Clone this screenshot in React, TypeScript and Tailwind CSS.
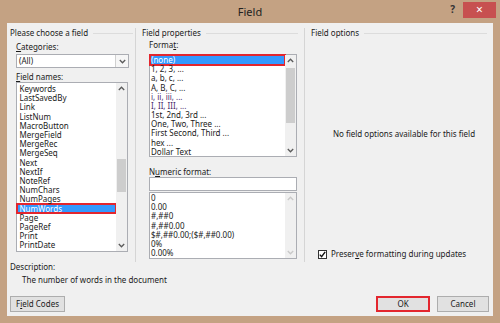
import type { ReactNode } from 'react'

const fieldNames = [
  'Keywords',
  'LastSavedBy',
  'Link',
  'ListNum',
  'MacroButton',
  'MergeField',
  'MergeRec',
  'MergeSeq',
  'Next',
  'NextIf',
  'NoteRef',
  'NumChars',
  'NumPages',
  'NumWords',
  'Page',
  'PageRef',
  'Print',
  'PrintDate',
]

const formats = [
  '(none)',
  '1, 2, 3, ...',
  'a, b, c, ...',
  'A, B, C, ...',
  'i, ii, iii, ...',
  'I, II, III, ...',
  '1st, 2nd, 3rd ...',
  'One, Two, Three ...',
  'First Second, Third ...',
  'hex ...',
  'Dollar Text',
]

const numeric = ['0', '0.00', '#,##0', '#,##0.00', '$#,##0.00;($#,##0.00)', '0%', '0.00%']

function Chevron({ up, faded }: { up?: boolean; faded?: boolean }) {
  return (
    <svg width="7" height="5" viewBox="0 0 7 5" className="block">
      <polyline
        points={up ? '0.8,4 3.5,1.2 6.2,4' : '0.8,1 3.5,3.8 6.2,1'}
        fill="none"
        stroke={faded ? '#c8c8c8' : '#5a5a5a'}
        strokeWidth="1.3"
      />
    </svg>
  )
}

function Scrollbar({ thumbTop, thumbHeight, faded }: { thumbTop?: number; thumbHeight?: number; faded?: boolean }) {
  return (
    <div className="flex w-[11px] shrink-0 flex-col bg-[#f0f0f0]">
      <div className="flex h-[11px] items-center justify-center">
        <Chevron up faded={faded} />
      </div>
      <div className="flex-1">
        {thumbHeight ? (
          <div className="mx-auto w-[9px] bg-[#cdcdcd]" style={{ marginTop: thumbTop, height: thumbHeight }} />
        ) : null}
      </div>
      <div className="flex h-[11px] items-center justify-center">
        <Chevron faded={faded} />
      </div>
    </div>
  )
}

function Item({ text, selected, className = '' }: { text: string; selected?: boolean; className?: string }) {
  return (
    <div
      className={`flex h-[9.2px] items-center whitespace-nowrap leading-none ${
        selected ? 'bg-[#3399ff] text-white shadow-[0_0_0_1px_#e3262e,inset_0_0_0_1px_#e3262e]' : ''
      } ${className}`}
    >
      {text}
    </div>
  )
}

function GroupTitle({ children }: { children: ReactNode }) {
  return (
    <div className="flex h-[10px] items-center gap-[5px]">
      <span className="whitespace-nowrap leading-none">{children}</span>
      <div className="h-px flex-1 bg-[#dcdcdc]" />
    </div>
  )
}

function Button({ children, primary, className = '' }: { children: ReactNode; primary?: boolean; className?: string }) {
  return (
    <button
      type="button"
      className={`flex h-[16px] items-center justify-center bg-[#e1e1e1] leading-none ${
        primary ? 'border-2 border-[#e3262e]' : 'border border-[#adadad]'
      } ${className}`}
    >
      {children}
    </button>
  )
}

export default function App() {
  return (
    <div className="flex h-[323px] w-[500px] flex-col bg-[#c4a283] font-['Noto_Sans',sans-serif] text-[8px] text-[#1a1a1a]">
      <div className="grid h-[23px] shrink-0 grid-cols-[1fr_auto_1fr]">
        <div />
        <div className="pt-[5px] text-[11px] leading-[14px] text-[#222]">Field</div>
        <div className="flex items-start justify-end">
          <span className="mr-[8px] mt-[4px] text-[10px] font-bold leading-none text-[#333]">?</span>
          <div className="mr-[4px] mt-[2px] flex h-[16px] w-[33px] items-center justify-center bg-[#c75050] text-[12px] leading-none text-white">
            ×
          </div>
        </div>
      </div>

      <div className="mx-[7px] mb-[7px] flex flex-1 flex-col bg-[#f0f0f0]">
        <div className="mt-[5px] flex h-[234px]">
          {/* left */}
          <div className="w-[129px] shrink-0 border-r border-[#d5d5d5] pl-[3px] pr-[2px]">
            <GroupTitle>Please choose a field</GroupTitle>
            <div className="pl-[6px]">
              <div className="mt-[4px] h-[10px] leading-[10px]">
                <span className="underline">C</span>ategories:
              </div>
              <div className="mt-[2px] flex h-[14px] w-[113px] border border-[#abadb3] bg-white">
                <div className="flex flex-1 items-center pl-[2px] leading-none">(All)</div>
                <div className="flex w-[13px] items-center justify-center border-l border-[#d0d0d0] bg-[#f6f6f6]">
                  <Chevron />
                </div>
              </div>
              <div className="mt-[4px] h-[10px] leading-[10px]">
                <span className="underline">F</span>ield names:
              </div>
              <div className="flex h-[170px] w-[112px] border border-[#abadb3] bg-white">
                <div className="flex-1 pt-[1.5px]">
                  {fieldNames.map((n) => (
                    <Item key={n} text={n} selected={n === 'NumWords'} className="pl-[2.5px]" />
                  ))}
                </div>
                <Scrollbar thumbTop={65} thumbHeight={33} />
              </div>
            </div>
          </div>

          {/* middle */}
          <div className="w-[169px] shrink-0 border-r border-[#d5d5d5] pl-[6px] pr-[6px]">
            <GroupTitle>Field properties</GroupTitle>
            <div className="pl-[7px]">
              <div className="mt-[2px] h-[10px] leading-[10px]">
                Forma<span className="underline">t</span>:
              </div>
              <div className="mt-[4px] flex h-[103px] w-[148px] border border-[#abadb3] bg-white">
                <div className="flex-1 pt-[0.4px]">
                  {formats.map((f, i) => (
                    <Item
                      key={f}
                      text={f}
                      selected={i === 0}
                      className={`pl-[1px] ${i === 4 || i === 5 ? 'text-[#4b2a6b]' : ''}`}
                    />
                  ))}
                </div>
                <Scrollbar thumbTop={2} thumbHeight={55} />
              </div>
              <div className="mt-[10px] h-[10px] leading-[10px]">
                N<span className="underline">u</span>meric format:
              </div>
              <div className="h-[14px] w-[148px] border border-[#abadb3] bg-white" />
              <div className="mt-[1px] flex h-[67px] w-[148px] border border-[#abadb3] bg-white">
                <div className="flex-1 pt-[0.4px]">
                  {numeric.map((n) => (
                    <Item key={n} text={n} className="pl-[1px]" />
                  ))}
                </div>
                <Scrollbar faded />
              </div>
            </div>
          </div>

          {/* right */}
          <div className="flex-1 pl-[6px] pr-[6px]">
            <GroupTitle>Field options</GroupTitle>
            <div className="mt-[91px] h-[10px] pl-[10px] text-center leading-[10px]">
              No field options available for this field
            </div>
            <div className="mt-[110px] flex h-[10px] items-center gap-[4px] pl-[7px]">
              <div className="flex h-[9px] w-[9px] items-center justify-center border border-[#333] bg-white">
                <svg width="7" height="7" viewBox="0 0 7 7">
                  <polyline points="0.8,3.6 2.6,5.6 6.2,0.8" fill="none" stroke="#111" strokeWidth="1.4" />
                </svg>
              </div>
              <span className="leading-none">
                Preser<span className="underline">v</span>e formatting during updates
              </span>
            </div>
          </div>
        </div>

        <div className="h-[10px] pl-[3px] leading-[10px]">Description:</div>
        <div className="mt-[3px] h-[10px] pl-[15px] leading-[10px]">The number of words in the document</div>

        <div className="mt-[11px] flex pr-[4px] pl-[3px]">
          <Button className="w-[55px]">
            F<span className="underline">i</span>eld Codes
          </Button>
          <div className="flex-1" />
          <Button primary className="w-[54px]">
            OK
          </Button>
          <Button className="ml-[7px] w-[52px]">Cancel</Button>
        </div>
      </div>
    </div>
  )
}
